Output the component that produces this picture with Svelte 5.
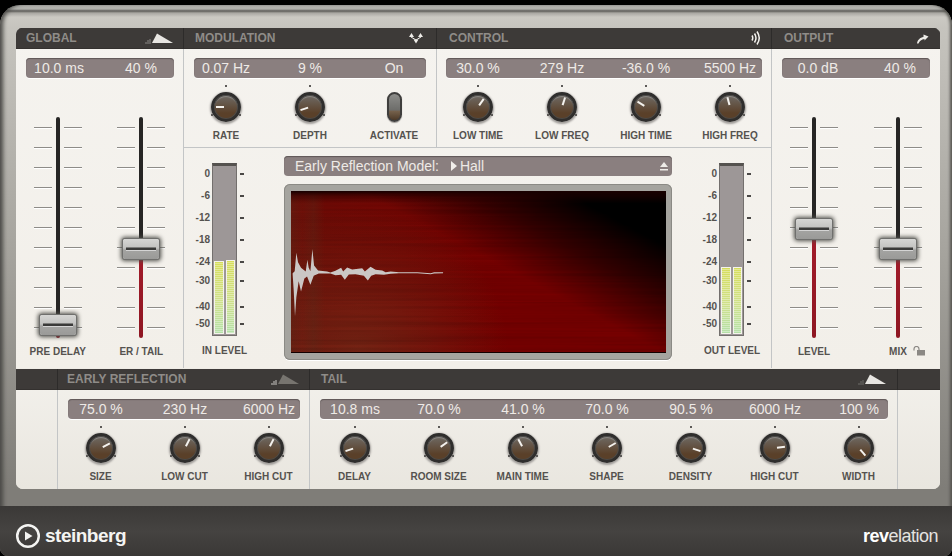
<script>
	const modulation = [
		{ label: 'RATE', angle: -90 },
		{ label: 'DEPTH', angle: -108 }
	];
	const control = [
		{ label: 'LOW TIME', angle: 35 },
		{ label: 'LOW FREQ', angle: 18 },
		{ label: 'HIGH TIME', angle: -58 },
		{ label: 'HIGH FREQ', angle: -15 }
	];
	const early = [
		{ label: 'SIZE', angle: 62 },
		{ label: 'LOW CUT', angle: 27 },
		{ label: 'HIGH CUT', angle: 27 }
	];
	const tail = [
		{ label: 'DELAY', angle: -108 },
		{ label: 'ROOM SIZE', angle: 55 },
		{ label: 'MAIN TIME', angle: -28 },
		{ label: 'SHAPE', angle: 60 },
		{ label: 'DENSITY', angle: 108 },
		{ label: 'HIGH CUT', angle: 83 },
		{ label: 'WIDTH', angle: 140 }
	];

	const ticks = Array.from({ length: 11 });

	// row heights between the scale marks, the scale is not linear
	const scale = [
		{ text: '0', h: 22 },
		{ text: '-6', h: 22 },
		{ text: '-12', h: 22 },
		{ text: '-18', h: 22 },
		{ text: '-24', h: 19 },
		{ text: '-30', h: 26 },
		{ text: '-40', h: 17 },
		{ text: '-50', h: 14 }
	];

	const waveUpper =
		'27,368 33,362 38,307 43,335 52,352 66,363 71,328 75,352 80,362 86,296 91,345 103,360 130,363 140,366 155,361 172,352 178,363 190,351 205,357 235,353 243,363 260,349 275,358 295,360 305,365 320,363 345,365 400,365 440,368 450,365 477,365';
	const waveLower =
		'477,368 450,369 440,371 400,368 345,368 320,370 300,373 275,371 262,376 252,390 240,376 215,371 195,372 183,388 172,373 155,374 140,369 105,369 90,376 80,403 70,378 62,384 52,423 45,392 38,440 34,497 30,418 27,373';
</script>

{#snippet knob(item)}
	<div class="cell">
		<div class="dial">
			<div class="pointer" style="transform: rotate({item.angle}deg)"></div>
		</div>
		<span class="label">{item.label}</span>
	</div>
{/snippet}

{#snippet fader(label, cap, extra)}
	<div class="fader-cell">
		<div class="fader" style="--cap: {cap}px">
			{#each ticks as _}
				<div class="tick"><i></i><i></i></div>
			{/each}
			<div class="track"></div>
			<div class="cap"></div>
		</div>
		<span class="label fader-label">{label}{@render extra?.()}</span>
	</div>
{/snippet}

{#snippet meter(label, level, side)}
	<div class="meter-block {side}">
		<div class="meter-row">
			<div class="scale">
				{#each scale as s}
					<div class="mark" style="height: {s.h}px"><span>{s.text}</span><i></i></div>
				{/each}
			</div>
			<div class="meter">
				<div class="bar"><div class="fill" style="height: {level[0]}px"></div></div>
				<div class="bar"><div class="fill" style="height: {level[1]}px"></div></div>
			</div>
		</div>
		<span class="label meter-label">{label}</span>
	</div>
{/snippet}

{#snippet wedge(bright, barColor)}
	<svg class="icon" width="30" height="14" viewBox="0 0 30 14">
		<path d="M2 13v-2M4 13v-4M6 13v-5" stroke={barColor} stroke-width="1" fill="none" />
		<polygon points="8,12 13,2.500 29,12" fill={bright} />
	</svg>
{/snippet}

{#snippet lock()}
	<svg class="lock" width="13" height="10" viewBox="0 0 13 10">
		<path d="M1 4.500V3a2.500 2.500 0 0 1 5 0v1.500" stroke="#8b8884" stroke-width="1.200" fill="none" />
		<rect x="4" y="4" width="8" height="5.500" fill="#8b8884" />
	</svg>
{/snippet}

<div class="window">
	<main class="panel">
		<div class="top">
			<section class="global">
				<header>
					<h2>GLOBAL</h2>
					{@render wedge('#e8e6e2', '#8a8784')}
				</header>
				<div class="readout"><span>10.0 ms</span><span>40 %</span></div>
				<div class="faders">
					{@render fader('PRE DELAY', 208)}
					{@render fader('ER / TAIL', 132)}
				</div>
			</section>

			<section class="modulation">
				<header>
					<h2>MODULATION</h2>
					<svg class="icon" width="16" height="12" viewBox="0 0 16 12">
						<path d="M1 5 3.500 1 6 5ZM10 5 12.500 1 15 5ZM5.500 7.500h5L8 11.500Z" fill="#eeece8" />
						<path d="M3 5 8 8l5-3" stroke="#eeece8" fill="none" />
					</svg>
				</header>
				<div class="readout"><span>0.07 Hz</span><span>9 %</span><span>On</span></div>
				<div class="knobs">
					{#each modulation as item}
						{@render knob(item)}
					{/each}
					<div class="cell">
						<div class="switch"></div>
						<span class="label">ACTIVATE</span>
					</div>
				</div>
			</section>

			<section class="control">
				<header>
					<h2>CONTROL</h2>
					<svg class="icon" width="10" height="16" viewBox="0 0 10 16">
						<path d="M1 5.500q1.500 2.500 0 5M3.500 3.500q3 4.500 0 9M6 1.500q4.500 6.500 0 13" stroke="#f4f2ee" stroke-width="1.500" fill="none" />
					</svg>
				</header>
				<div class="readout"><span>30.0 %</span><span>279 Hz</span><span>-36.0 %</span><span>5500 Hz</span></div>
				<div class="knobs">
					{#each control as item}
						{@render knob(item)}
					{/each}
				</div>
			</section>

			<section class="output">
				<header>
					<h2>OUTPUT</h2>
					<svg class="icon" width="13" height="11" viewBox="0 0 13 11">
						<path d="M1 10.500C1.500 7 4 4.500 7.500 4V1.500L12.500 3.500 8.500 7.500V6C5.500 6.500 3.500 8 2.500 10.500Z" fill="#eeece8" />
					</svg>
				</header>
				<div class="readout"><span>0.0 dB</span><span>40 %</span></div>
				<div class="faders">
					{@render fader('LEVEL', 112)}
					{@render fader('MIX', 132, lock)}
				</div>
			</section>

			<section class="display-area">
				{@render meter('IN LEVEL', [73, 74], 'left')}
				<div class="center">
					<div class="dropdown">
						<span>Early Reflection Model:</span>
						<span class="model"><i class="arrow"></i>Hall</span>
						<svg class="eject" width="8" height="9" viewBox="0 0 8 9">
							<polygon points="0,5 4,0 8,5" fill="#eeece8" />
							<rect y="7" width="8" height="1.500" fill="#eeece8" />
						</svg>
					</div>
					<div class="screen">
						<div class="spectrum">
							<svg class="grain" width="375" height="162">
								<filter id="streaks">
									<feTurbulence type="fractalNoise" baseFrequency="0.004 0.35" numOctaves="2" seed="4" />
									<feColorMatrix values="0 0 0 0 0  0 0 0 0 0  0 0 0 0 0  1.400 0 0 0 -0.450" />
								</filter>
								<rect width="375" height="162" filter="url(#streaks)" />
							</svg>
							<svg class="wave" width="375" height="162" viewBox="22 123 1122 483">
								<polygon points="{waveUpper} {waveLower}" fill="#cbc7c5" />
							</svg>
						</div>
					</div>
				</div>
				{@render meter('OUT LEVEL', [67, 67], 'right')}
			</section>
		</div>

		<div class="bottom">
			<section class="side"><header></header></section>

			<section class="early">
				<header>
					<h2>EARLY REFLECTION</h2>
					{@render wedge('#77746f', '#c9c6c2')}
				</header>
				<div class="readout"><span>75.0 %</span><span>230 Hz</span><span>6000 Hz</span></div>
				<div class="knobs">
					{#each early as item}
						{@render knob(item)}
					{/each}
				</div>
			</section>

			<section class="tail">
				<header>
					<h2>TAIL</h2>
					{@render wedge('#e8e6e2', '#6f6c69')}
				</header>
				<div class="readout">
					<span>10.8 ms</span><span>70.0 %</span><span>41.0 %</span><span>70.0 %</span><span>90.5 %</span><span>6000 Hz</span><span>100 %</span>
				</div>
				<div class="knobs">
					{#each tail as item}
						{@render knob(item)}
					{/each}
				</div>
			</section>

			<section class="side last"><header></header></section>
		</div>
	</main>

	<footer>
		<div class="brand">
			<svg width="26" height="26" viewBox="0 0 26 26">
				<circle cx="13" cy="13" r="10.800" stroke="#f4f4f2" stroke-width="2.500" fill="none" />
				<polygon points="10,8.500 17.500,13 10,17.500" fill="#f4f4f2" />
			</svg>
			<span>steinberg</span>
		</div>
		<div class="product"><b>rev</b>elation</div>
	</footer>
</div>

<style>
	:global(body) {
		background: #000;
		font-family: 'Liberation Sans', Arial, sans-serif;
	}

	.window {
		box-sizing: border-box;
		width: 952px;
		height: 551px;
		margin-top: 5px;
		padding: 23px 12px 0 16px;
		overflow: hidden;
		border-radius: 20px 20px 8px 8px;
		background: linear-gradient(
			180deg,
			#b9b9b5 0,
			#aeaeaa 4px,
			#5d5c59 6px,
			#a9a7a2 8px,
			#cbc9c3 12px,
			#c6c4be 23px,
			#a5a39d 250px,
			#7f7d78 484px
		);
		box-shadow:
			inset 5px 0 4px -2px #4a4946,
			inset -3px 0 3px -1px #55544f;
	}

	.panel {
		width: 924px;
		height: 461px;
		overflow: hidden;
		border-radius: 6px 6px 7px 7px;
		background: #f3f1ec;
	}

	/* sections */
	.top {
		display: grid;
		grid-template-columns: 168px 253px 335px 168px;
		grid-template-rows: 120px 220px;
		height: 340px;
		border-bottom: 1px solid #efece6;
		background: linear-gradient(#f5f3ef, #f2efe9);
	}
	.global {
		grid-row: 1 / 3;
		grid-column: 1;
		border-right: 1px solid #c3c5c6;
	}
	.output {
		grid-row: 1 / 3;
		grid-column: 4;
	}
	.modulation {
		grid-column: 2;
		border-right: 1px solid #c3c5c6;
		border-bottom: 1px solid #c3c5c6;
		box-sizing: border-box;
	}
	.control {
		grid-column: 3;
		border-right: 1px solid #c3c5c6;
		border-bottom: 1px solid #c3c5c6;
		box-sizing: border-box;
	}
	.display-area {
		grid-column: 2 / 4;
		grid-row: 2;
		display: grid;
		grid-template-columns: 100px 388px 99px;
		border-right: 1px solid #c3c5c6;
	}

	.bottom {
		display: grid;
		grid-template-columns: 42px 252px 588px 42px;
		height: 120px;
		background: linear-gradient(#f3f1ec, #e9e6df);
	}
	.bottom section {
		box-sizing: border-box;
		border-right: 1px solid #c3c5c6;
	}
	.bottom .last {
		border-right: 0;
	}
	.early,
	.tail {
		display: flex;
		flex-direction: column;
	}

	header {
		box-sizing: border-box;
		display: flex;
		align-items: center;
		justify-content: space-between;
		height: 21px;
		padding: 0 10px;
		background: #3d3a38;
		box-shadow: 1px 0 0 #2d2b2a;
		border-bottom: 1px solid #34312f;
	}
	h2 {
		margin: 0;
		font-size: 12px;
		font-weight: 700;
		line-height: 19px;
		color: #8f8c88;
	}
	.icon {
		display: block;
	}
	.global header,
	.early header {
		padding-left: 10px;
		padding-right: 9px;
	}
	.early header {
		padding-left: 9px;
	}
	.modulation header {
		padding: 0 12px 0 11px;
	}
	.control header {
		padding: 0 10px 0 12px;
	}
	.output header {
		padding: 0 11px 0 12px;
	}
	.tail header {
		padding-left: 11px;
	}

	/* value strip */
	.readout {
		box-sizing: border-box;
		display: grid;
		grid-auto-flow: column;
		grid-auto-columns: 84px;
		justify-content: center;
		align-items: center;
		height: 20px;
		margin: 9px 10px 0;
		border-radius: 4px;
		background: #8a7f7f;
		box-shadow:
			inset 0 1px 1px #5f5757,
			0 1px 0 #fff;
		font-size: 14px;
		color: #eeeae6;
	}
	.readout span {
		text-align: center;
		white-space: nowrap;
	}
	.global .readout {
		grid-auto-columns: 82px;
		margin-right: 9px;
	}
	.output .readout {
		grid-auto-columns: 82px;
		padding-left: 6px;
	}
	.control .readout {
		margin: 9px 9px 0;
	}
	.early .readout {
		margin-right: 9px;
		padding-left: 2px;
	}
	.tail .readout {
		margin-right: 9px;
		padding-left: 6px;
	}
	.early .knobs {
		padding-left: 2px;
	}
	.tail .knobs {
		padding-left: 6px;
	}

	/* knobs */
	.knobs {
		display: grid;
		grid-auto-flow: column;
		grid-auto-columns: 84px;
		justify-content: center;
		box-sizing: border-box;
		padding-top: 14px;
	}
	.cell {
		display: flex;
		flex-direction: column;
		align-items: center;
		gap: 8px;
		min-width: 0;
	}
	.dial {
		position: relative;
		box-sizing: border-box;
		width: 30px;
		height: 30px;
		border-radius: 50%;
		background: linear-gradient(#6f6b66, #5a4029 75%);
		border: 3px solid #2f2e2d;
		box-shadow:
			0 1px 2px 1px #a09d9a,
			inset 0 0 0 1px #4b4a48,
			inset 0 2px 1px #8d8a86;
	}
	/* range dots around the dial */
	.dial::before {
		content: '';
		position: absolute;
		left: 11px;
		top: -10px;
		width: 2px;
		height: 2px;
		background: #5c5a58;
		box-shadow:
			-14px 29px 0 #5c5a58,
			14px 29px 0 #5c5a58;
	}
	.pointer {
		position: absolute;
		left: 11px;
		top: 0;
		width: 2px;
		height: 12px;
		transform-origin: 1px 12px;
	}
	.pointer::after {
		content: '';
		position: absolute;
		left: 0;
		top: 2px;
		width: 2px;
		height: 8px;
		background: #f4f2ee;
	}
	.switch {
		box-sizing: border-box;
		width: 15px;
		height: 30px;
		border-radius: 8px;
		border: 2px solid #3f3e3d;
		background: linear-gradient(#8d8d8a 0, #6d6d6a 62%, #75614c 66%, #4d3a28 100%);
		box-shadow: 0 1px 1px #9a9794;
	}
	.label {
		font-size: 10px;
		font-weight: 700;
		line-height: 12px;
		color: #55524f;
		white-space: nowrap;
	}

	/* faders */
	.faders {
		display: flex;
		justify-content: center;
		margin-top: 39px;
	}
	.fader-cell {
		display: flex;
		flex-direction: column;
		align-items: center;
		width: 84px;
	}
	.fader {
		position: relative;
		display: flex;
		flex-direction: column;
		justify-content: space-between;
		box-sizing: border-box;
		width: 48px;
		height: 221px;
		padding: 10px 0 10px;
	}
	.tick {
		display: flex;
		justify-content: space-between;
		height: 1px;
	}
	.tick i {
		width: 18px;
		height: 1px;
		background: #8e8c88;
		box-shadow: 0 1px 0 #fff;
	}
	.track {
		position: absolute;
		left: 22px;
		top: 0;
		bottom: 0;
		width: 4px;
		border-radius: 2px;
		background: linear-gradient(#262524 var(--cap), #a31c2a var(--cap), #8e1622);
	}
	.cap {
		position: absolute;
		left: 6px;
		top: calc(var(--cap) - 10px);
		box-sizing: border-box;
		width: 36px;
		height: 20px;
		border-radius: 2px;
		background: linear-gradient(#d6d6d4 0, #c2c2c0 45%, #a4a4a2 55%, #9a9a98 100%);
		box-shadow:
			0 0 0 1px #6f6f6d,
			0 0 4px 2px #4f4f4a;
	}
	.cap::after {
		content: '';
		position: absolute;
		left: 3px;
		right: 3px;
		top: 9px;
		height: 2px;
		background: #3a3a39;
		box-shadow:
			0 -1px 0 #7d7d7b,
			0 1px 0 #d4d4d4;
	}
	.fader-label {
		margin-top: 8px;
		position: relative;
	}
	.lock {
		position: absolute;
		left: 24px;
		top: 0;
	}

	/* meters */
	.meter-block {
		display: flex;
		flex-direction: column;
		padding-top: 15px;
	}
	.meter-block.right {
		padding-left: 19px;
	}
	.meter-row {
		position: relative;
		display: flex;
		height: 173px;
	}
	.scale {
		box-sizing: border-box;
		width: 66px;
		padding-top: 5px;
		position: relative;
		z-index: 1;
	}
	.mark {
		display: grid;
		grid-template-columns: 26px 30px 4px;
		align-items: start;
	}
	.mark span {
		font-size: 10px;
		font-weight: 700;
		line-height: 12px;
		color: #55524f;
		text-align: right;
	}
	.mark i {
		grid-column: 3;
		width: 4px;
		height: 1.500px;
		margin-top: 5px;
		background: #4a4846;
	}
	.meter {
		position: absolute;
		left: 28px;
		top: 0;
		box-sizing: border-box;
		display: flex;
		justify-content: center;
		gap: 2px;
		width: 25px;
		height: 173px;
		padding: 0 1px 1px;
		background: #9d9797;
		border: 1px solid #736f6d;
		border-top: 3px solid #55524f;
	}
	.bar {
		display: flex;
		align-items: flex-end;
		width: 10px;
	}
	.fill {
		box-sizing: border-box;
		width: 100%;
		border: 1px solid #f4f3ec;
		background:
			repeating-linear-gradient(transparent 0 1px, rgba(255, 255, 255, 0.35) 1px 2px),
			linear-gradient(#d6dd5c, #cfe08a 55%, #b5e0a8);
	}
	.meter-label {
		margin-left: 18px;
		margin-top: 9px;
	}
	.right .meter-label {
		margin-left: 13px;
	}

	/* centre */
	.center {
		display: flex;
		flex-direction: column;
		padding-top: 8px;
	}
	.dropdown {
		display: flex;
		align-items: center;
		box-sizing: border-box;
		height: 20px;
		padding: 0 4px 0 11px;
		border-radius: 4px;
		background: #8a7f7f;
		box-shadow: inset 0 1px 1px #5f5757;
		font-size: 14px;
		color: #eeeae6;
	}
	.model {
		display: flex;
		align-items: center;
		margin-left: 12px;
		flex: 1;
	}
	.arrow {
		width: 0;
		height: 0;
		margin-right: 3px;
		border-left: 6px solid #f1eeea;
		border-top: 5px solid transparent;
		border-bottom: 5px solid transparent;
	}
	.screen {
		box-sizing: border-box;
		width: 388px;
		height: 176px;
		margin-top: 8px;
		padding: 7px 6px 7px 7px;
		border-radius: 6px;
		background: #a5a49f;
		box-shadow:
			inset 0 0 0 1px #8b8a85,
			0 1px 0 #fff;
	}
	.spectrum {
		position: relative;
		width: 375px;
		height: 162px;
		overflow: hidden;
		background:
			linear-gradient(#1a0000 0, rgba(40, 0, 0, 0.5) 3%, transparent 8%),
			linear-gradient(28deg, transparent 55%, rgba(0, 0, 0, 0.55) 70%, #000 85%),
			linear-gradient(90deg, rgba(90, 50, 30, 0.35) 0, rgba(120, 60, 40, 0.1) 3%, rgba(90, 50, 30, 0.3) 6%, transparent 9%),
			radial-gradient(ellipse 40% 90% at 18% 100%, rgba(120, 62, 35, 0.5), transparent 100%),
			linear-gradient(90deg, #6e0c06, #760000 60%, #760000);
		box-shadow: inset 0 -1px 0 #140000;
	}
	.grain {
		position: absolute;
		inset: 0;
		opacity: 0.18;
	}
	.wave {
		position: absolute;
		inset: 0;
	}

	/* footer */
	footer {
		display: flex;
		align-items: center;
		justify-content: space-between;
		box-sizing: border-box;
		height: 50px;
		margin: 17px -12px 0 -16px;
		padding: 10px 14px 0 15px;
		background: linear-gradient(#3b3937, #454341 50%, #3a3836);
	}
	.brand {
		display: flex;
		align-items: center;
		gap: 4px;
		font-size: 19px;
		font-weight: 700;
		letter-spacing: -0.5px;
		color: #f4f4f2;
	}
	.brand svg {
		display: block;
	}
	.product {
		font-size: 18px;
		letter-spacing: -0.5px;
		color: #e4e3e0;
	}
	.product b {
		color: #fff;
	}
</style>
